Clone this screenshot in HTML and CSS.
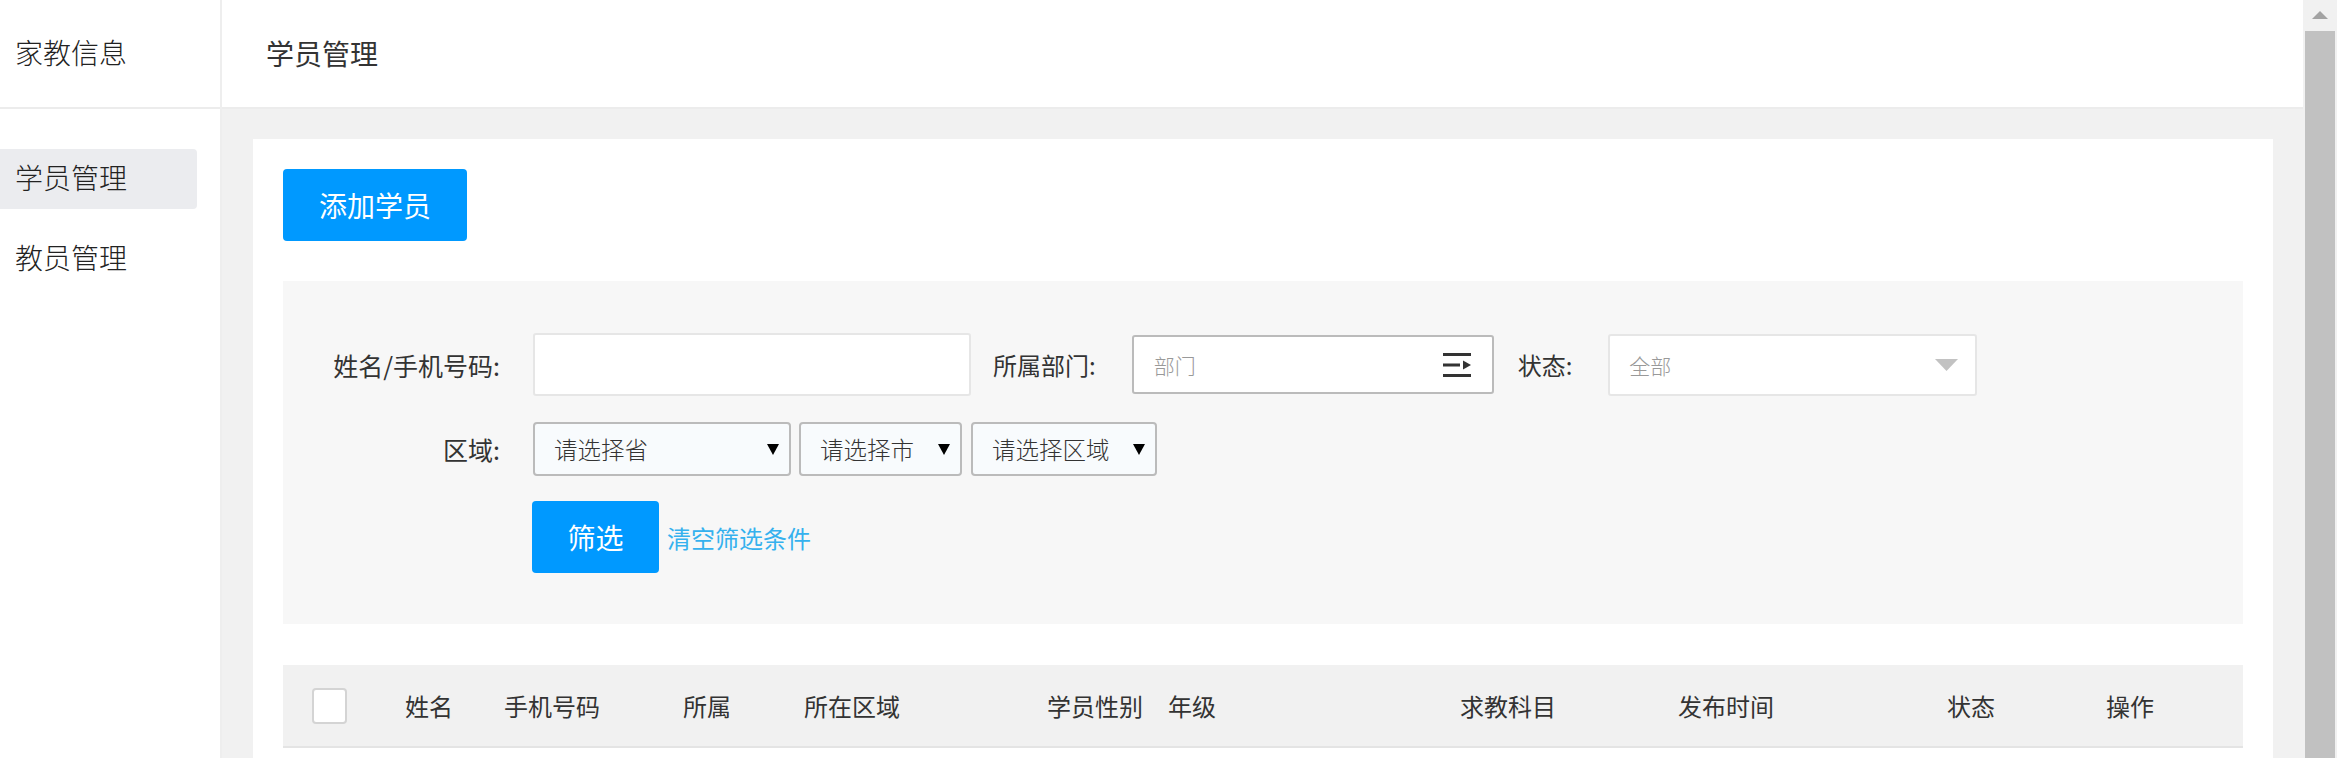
FILE: index.html
```html
<!DOCTYPE html>
<html lang="zh-CN">
<head>
<meta charset="utf-8">
<title>学员管理</title>
<link rel="stylesheet" href="styles.css">
</head>
<body>
<div class="app">
  <aside class="sidebar">
    <div class="brand">家教信息</div>
    <nav class="menu">
      <a class="menu-item active">学员管理</a>
      <a class="menu-item">教员管理</a>
    </nav>
  </aside>
  <div class="main">
    <header class="topbar">学员管理</header>
    <div class="content">
      <div class="card">
        <button class="btn btn-add">添加学员</button>
        <div class="filter">
          <div class="row">
            <label class="label-main">姓名/手机号码:</label>
            <input class="text-input" type="text">
            <label class="label-inline label-dept">所属部门:</label>
            <div class="dept-input">
              <span class="placeholder">部门</span>
              <svg class="dept-icon" width="28" height="24" viewBox="0 0 28 24">
                <rect x="0" y="0" width="28" height="3" fill="#333"/>
                <rect x="0" y="10.5" width="17" height="3" fill="#333"/>
                <polygon points="20,7.5 28,12 20,16.5" fill="#333"/>
                <rect x="0" y="21" width="28" height="3" fill="#333"/>
              </svg>
            </div>
            <label class="label-inline label-status">状态:</label>
            <div class="status-select">
              <span class="placeholder">全部</span>
              <svg width="23" height="12" viewBox="0 0 23 12"><polygon points="0,0 23,0 11.5,12" fill="#c2c2c2"/></svg>
            </div>
          </div>
          <div class="row row-2">
            <label class="label-main">区域:</label>
            <div class="select select-prov"><span>请选择省</span><svg width="12" height="11" viewBox="0 0 12 11"><polygon points="0,0 12,0 6,11" fill="#000"/></svg></div>
            <div class="select select-city"><span>请选择市</span><svg width="12" height="11" viewBox="0 0 12 11"><polygon points="0,0 12,0 6,11" fill="#000"/></svg></div>
            <div class="select select-area"><span>请选择区域</span><svg width="12" height="11" viewBox="0 0 12 11"><polygon points="0,0 12,0 6,11" fill="#000"/></svg></div>
          </div>
          <div class="row row-3">
            <span class="spacer"></span>
            <button class="btn btn-filter">筛选</button>
            <a class="clear-link">清空筛选条件</a>
          </div>
        </div>
        <div class="table-head">
          <div class="cell cell-check"><span class="checkbox"></span></div>
          <div class="cell">姓名</div>
          <div class="cell">手机号码</div>
          <div class="cell">所属</div>
          <div class="cell">所在区域</div>
          <div class="cell">学员性别</div>
          <div class="cell">年级</div>
          <div class="cell">求教科目</div>
          <div class="cell">发布时间</div>
          <div class="cell">状态</div>
          <div class="cell">操作</div>
        </div>
      </div>
    </div>
  </div>
  <div class="scrollbar">
    <div class="sb-button"><span class="sb-arrow"></span></div>
    <div class="sb-thumb"></div>
  </div>
</div>
</body>
</html>
```
FILE: styles.css
```css
html, body {
  margin: 0;
  height: 758px;
  overflow: hidden;
}
body {
  font-family: "Noto Sans CJK SC", "Noto Sans", sans-serif;
  color: #333;
  background: #fff;
}
.app {
  display: flex;
  height: 758px;
}
.sidebar {
  flex: none;
  width: 220px;
  border-right: 2px solid #eeeeee;
  background: #fff;
}
.brand {
  box-sizing: border-box;
  height: 109px;
  border-bottom: 2px solid #ececec;
  display: flex;
  align-items: center;
  padding: 0 0 4px 15px;
  font-size: 28px;
  font-weight: 300;
  color: #222;
}
.menu {
  padding-top: 40px;
}
.menu-item {
  display: flex;
  align-items: center;
  box-sizing: border-box;
  width: 197px;
  height: 60px;
  padding: 0 0 4px 15px;
  margin-bottom: 20px;
  border-radius: 0 4px 4px 0;
  font-size: 28px;
  font-weight: 300;
  color: #222;
}
.menu-item.active {
  background: #ebecef;
}
.main {
  flex: 1;
  min-width: 0;
  display: flex;
  flex-direction: column;
  background: #f1f1f1;
}
.topbar {
  flex: none;
  box-sizing: border-box;
  height: 109px;
  border-bottom: 2px solid #ececec;
  background: #fff;
  padding: 0 0 2px 44px;
  display: flex;
  align-items: center;
  font-size: 28px;
  color: #333;
}
.content {
  padding: 30px 30px 0 31px;
}
.card {
  background: #fff;
  padding: 30px;
}
.btn {
  border: 0;
  border-radius: 4px;
  background: #0099ff;
  color: #fff;
  font-family: inherit;
  font-size: 28px;
  padding: 0;
  cursor: pointer;
}
.btn-add {
  display: block;
  width: 184px;
  height: 72px;
}
.filter {
  margin-top: 40px;
  background: #f7f7f7;
  padding: 52px 0 51px;
}
.row {
  display: flex;
  align-items: center;
}
.row-2 {
  margin-top: 26px;
}
.row-3 {
  margin-top: 25px;
}
.label-main {
  width: 217px;
  margin-right: 33px;
  text-align: right;
  font-size: 25px;
  color: #333;
}
.label-inline {
  font-size: 24px;
  color: #333;
}
.label-dept {
  margin: 0 36px 0 22px;
}
.label-status {
  margin: 0 36px 0 24px;
}
.text-input {
  box-sizing: border-box;
  width: 438px;
  height: 63px;
  border: 2px solid #e6e6e6;
  border-radius: 3px;
  background: #fff;
  margin: 0;
  outline: none;
}
.dept-input {
  box-sizing: border-box;
  width: 362px;
  height: 59px;
  border: 2px solid #bbbbbb;
  border-radius: 3px;
  background: #fff;
  display: flex;
  align-items: center;
  justify-content: space-between;
  padding: 0 21px 0 20px;
}
.placeholder {
  font-size: 21px;
  color: #999;
  font-weight: 300;
}
.status-select {
  box-sizing: border-box;
  width: 369px;
  height: 62px;
  border: 2px solid #e6e6e6;
  border-radius: 3px;
  background: #fff;
  display: flex;
  align-items: center;
  justify-content: space-between;
  padding: 0 17px 0 19px;
}
.select {
  box-sizing: border-box;
  height: 54px;
  border: 2px solid #bbbbbb;
  border-radius: 4px;
  background: #f8fbfd;
  display: flex;
  align-items: center;
  justify-content: space-between;
  padding: 0 10px 0 19px;
  font-size: 23.5px;
  font-weight: 300;
  color: #333;
}
.select-prov { width: 258px; }
.select-city { width: 163px; margin-left: 8px; }
.select-area { width: 186px; margin-left: 9px; }
.spacer {
  width: 249px;
}
.btn-filter {
  width: 127px;
  height: 72px;
}
.clear-link {
  margin-left: 8px;
  font-size: 24px;
  color: #35b1ee;
  cursor: pointer;
}
.table-head {
  margin-top: 41px;
  height: 81px;
  border-bottom: 2px solid #e4e4e4;
  background: #f1f1f1;
  display: grid;
  grid-template-columns: 122px 99px 179px 121px 243px 121px 292px 218px 269px 159px 136px;
  align-items: center;
}
.cell {
  font-size: 24px;
  color: #333;
  white-space: nowrap;
}
.cell-check {
  padding-left: 29px;
  display: flex;
}
.checkbox {
  box-sizing: border-box;
  width: 35px;
  height: 36px;
  border: 2px solid #d4d4d4;
  border-radius: 4px;
  background: #fff;
}
.scrollbar {
  flex: none;
  width: 34px;
  background: #f1f1f1;
  display: flex;
  flex-direction: column;
}
.sb-button {
  height: 31px;
  display: flex;
  justify-content: center;
  padding-top: 11px;
  box-sizing: border-box;
}
.sb-arrow {
  width: 0;
  height: 0;
  border-left: 8px solid transparent;
  border-right: 8px solid transparent;
  border-bottom: 8px solid #a3a3a3;
}
.sb-thumb {
  flex: 1;
  margin: 0 2px;
  background: #c1c1c1;
}
```
